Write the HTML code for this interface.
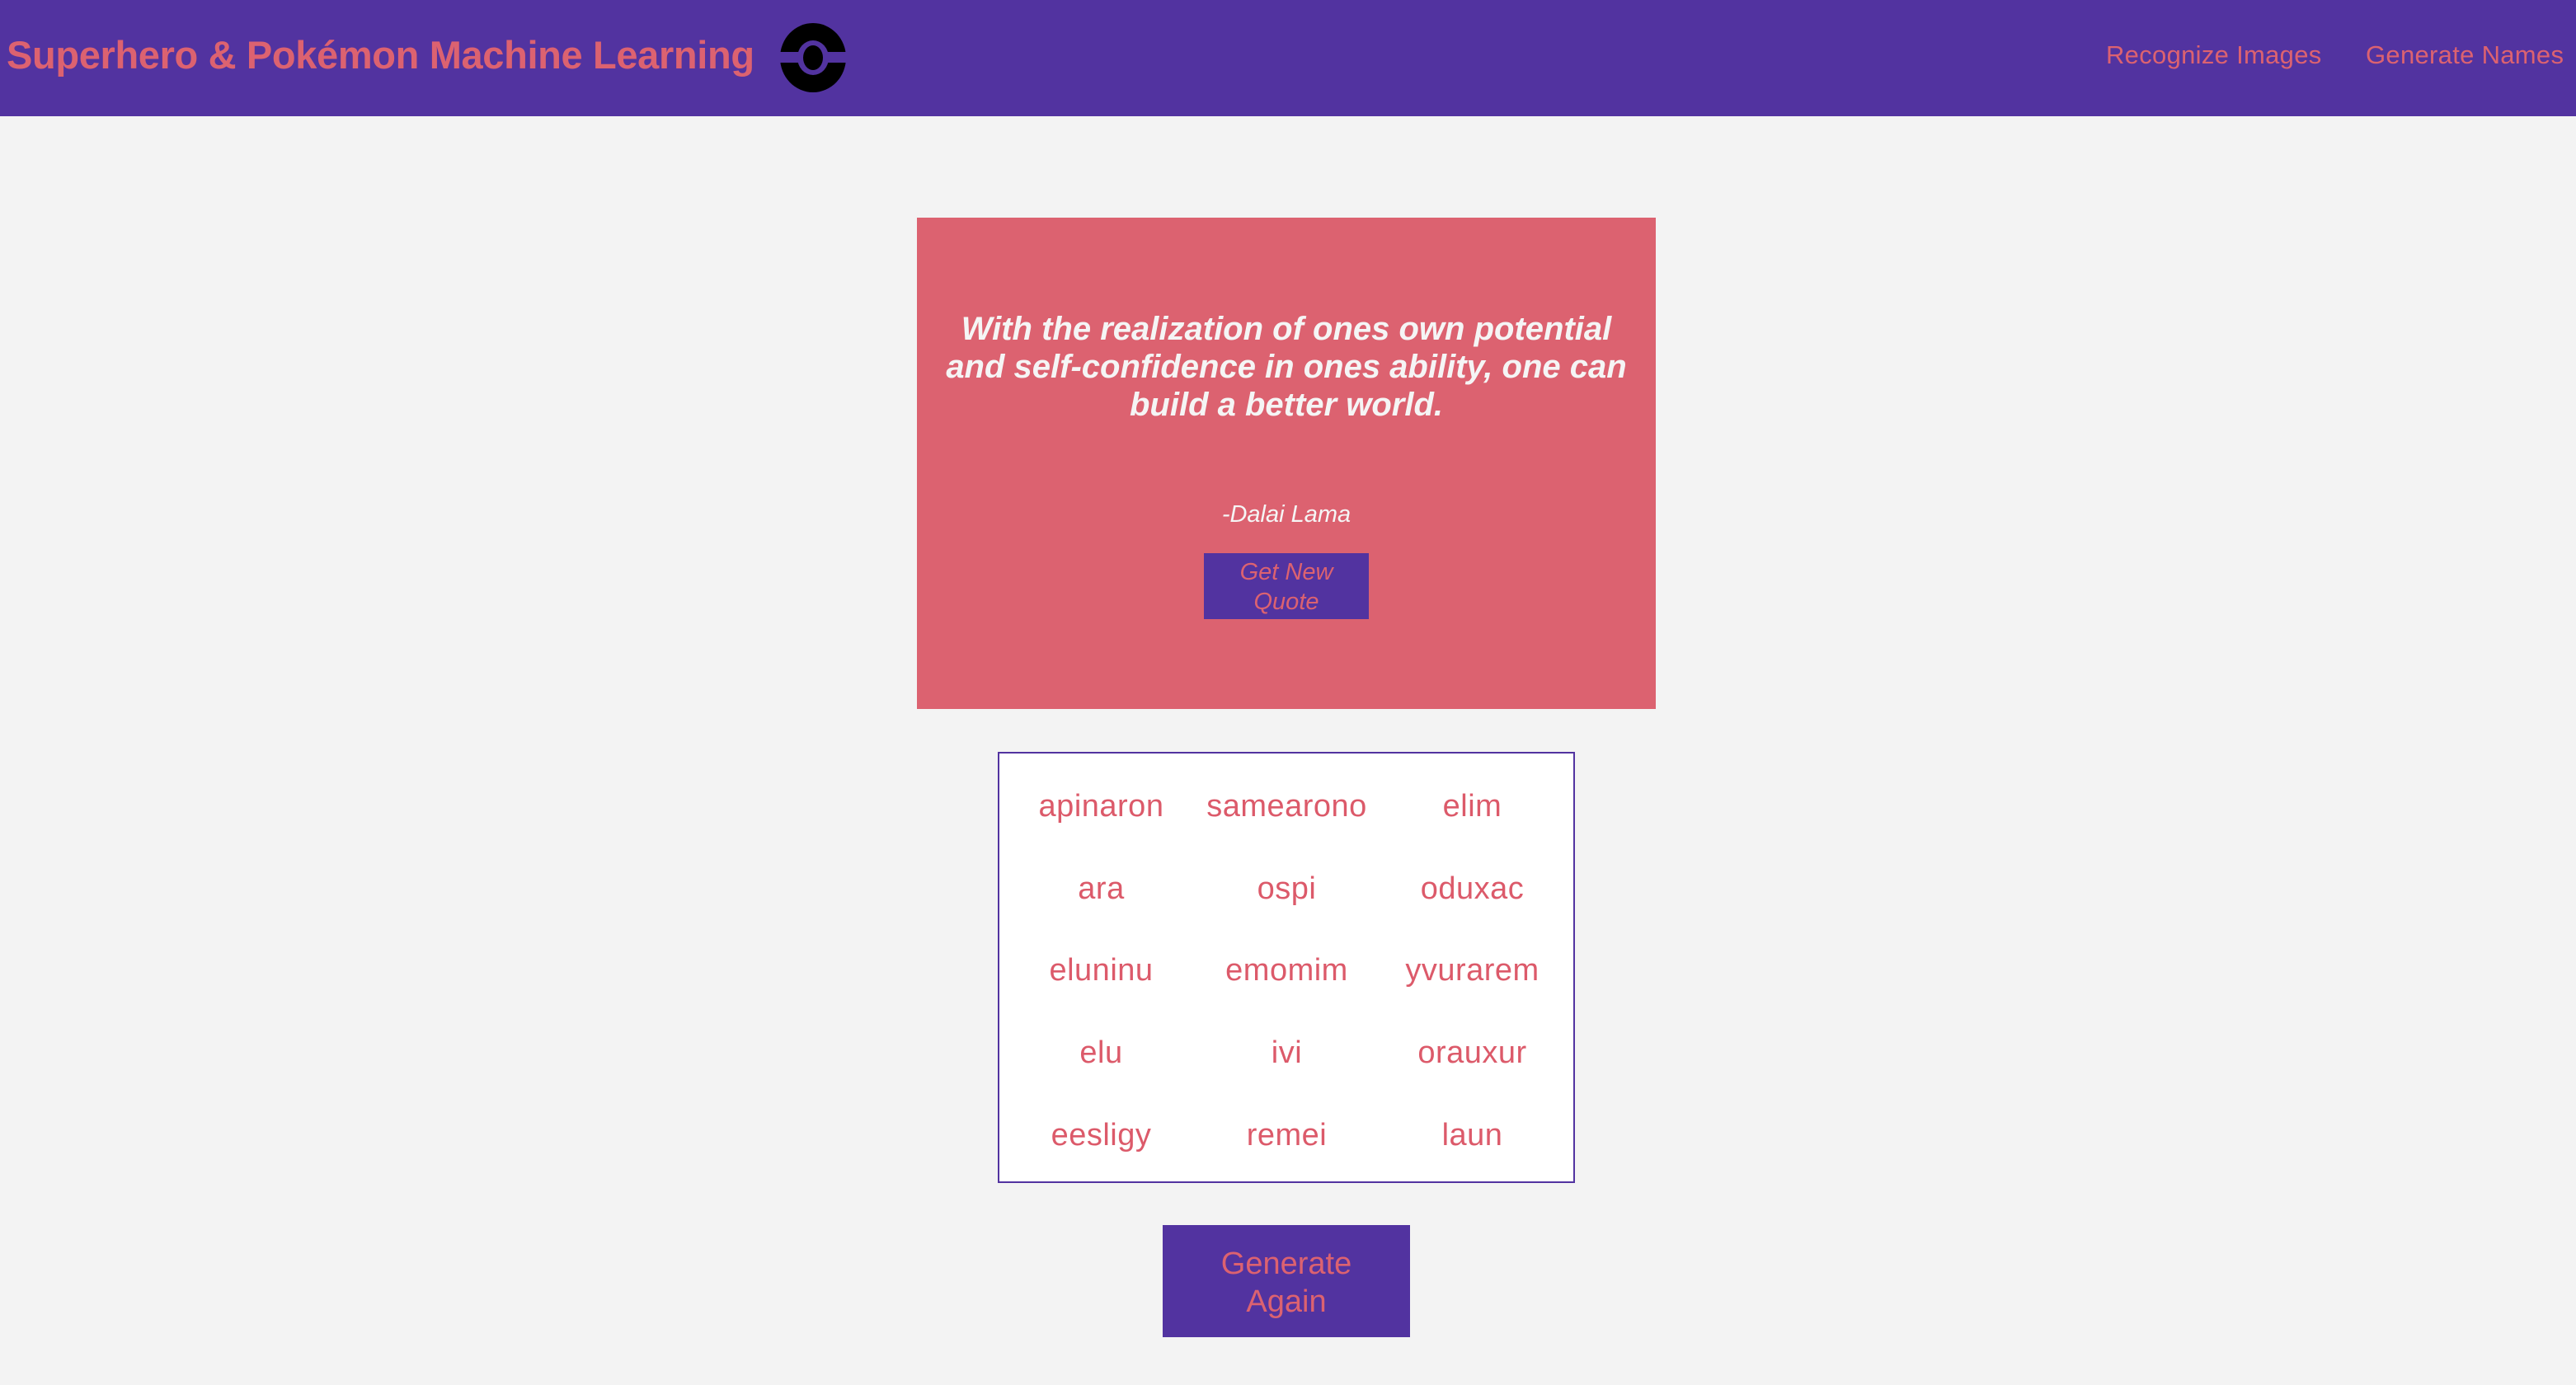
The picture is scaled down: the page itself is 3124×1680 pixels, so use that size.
<!DOCTYPE html>
<html><head><meta charset="utf-8"><style>
*{margin:0;padding:0;box-sizing:border-box}
body{width:3124px;height:1680px;background:#f3f3f3;font-family:"Liberation Sans",sans-serif;position:relative;overflow:hidden}
.hdr{position:absolute;left:0;top:0;width:3124px;height:141px;background:#5233a0}
.title{position:absolute;left:8px;top:37px;font-size:47px;font-weight:bold;color:#dc6270;letter-spacing:-0.35px;white-space:nowrap;line-height:60px}
.nav{position:absolute;top:47px;font-size:31px;color:#dc6270;line-height:40px;white-space:nowrap;letter-spacing:0.3px}
.quote{position:absolute;left:1112px;top:264px;width:896px;height:596px;background:#dc6270}
.qt{position:absolute;left:28px;width:840px;top:112px;text-align:center;color:#f5f5f5;font-weight:bold;font-style:italic;font-size:40px;line-height:46px;letter-spacing:0px}
.auth{position:absolute;left:0;width:896px;top:340px;text-align:center;color:#f5f5f5;font-style:italic;font-size:29px;line-height:40px}
.qb{position:absolute;left:348px;top:407px;width:200px;height:80px;background:#5233a0;color:#dc6270;font-style:italic;font-size:29px;line-height:36px;text-align:center;padding-top:5px}
.names{position:absolute;left:1210px;top:912px;width:700px;height:523px;background:#fff;border:2px solid #5233a0}
.n{position:absolute;width:225px;text-align:center;color:#dc5a6a;font-size:38px;line-height:46px;letter-spacing:0.5px}
.gb{position:absolute;left:1410px;top:1486px;width:300px;height:136px;background:#5233a0;color:#dc6270;font-size:38px;line-height:46px;text-align:center;padding-top:24px}
</style></head><body>
<div class="hdr">
<div class="title">Superhero &amp; Pokémon Machine Learning</div>
<svg style="position:absolute;left:944px;top:28px" width="84" height="84" viewBox="0 0 84 84">
<ellipse cx="42" cy="42" rx="40" ry="42" fill="#000"/>
<rect x="0" y="35" width="84" height="13" fill="#5233a0"/>
<ellipse cx="42" cy="42" rx="19" ry="21" fill="#5233a0"/>
<ellipse cx="42" cy="42" rx="12" ry="15" fill="#000"/>
</svg>
<div class="nav" style="left:2554px">Recognize Images</div>
<div class="nav" style="left:2869px">Generate Names</div>
</div>
<div class="quote">
<div class="qt">With the realization of ones own potential and self-confidence in ones ability, one can build a better world.</div>
<div class="auth">-Dalai Lama</div>
<div class="qb">Get New<br>Quote</div>
</div>
<div class="names">
<div class="n" style="left:11px;top:41px">apinaron</div><div class="n" style="left:236px;top:41px">samearono</div><div class="n" style="left:461px;top:41px">elim</div>
<div class="n" style="left:11px;top:141px">ara</div><div class="n" style="left:236px;top:141px">ospi</div><div class="n" style="left:461px;top:141px">oduxac</div>
<div class="n" style="left:11px;top:240px">eluninu</div><div class="n" style="left:236px;top:240px">emomim</div><div class="n" style="left:461px;top:240px">yvurarem</div>
<div class="n" style="left:11px;top:340px">elu</div><div class="n" style="left:236px;top:340px">ivi</div><div class="n" style="left:461px;top:340px">orauxur</div>
<div class="n" style="left:11px;top:440px">eesligy</div><div class="n" style="left:236px;top:440px">remei</div><div class="n" style="left:461px;top:440px">laun</div>
</div>
<div class="gb">Generate<br>Again</div>
</body></html>
